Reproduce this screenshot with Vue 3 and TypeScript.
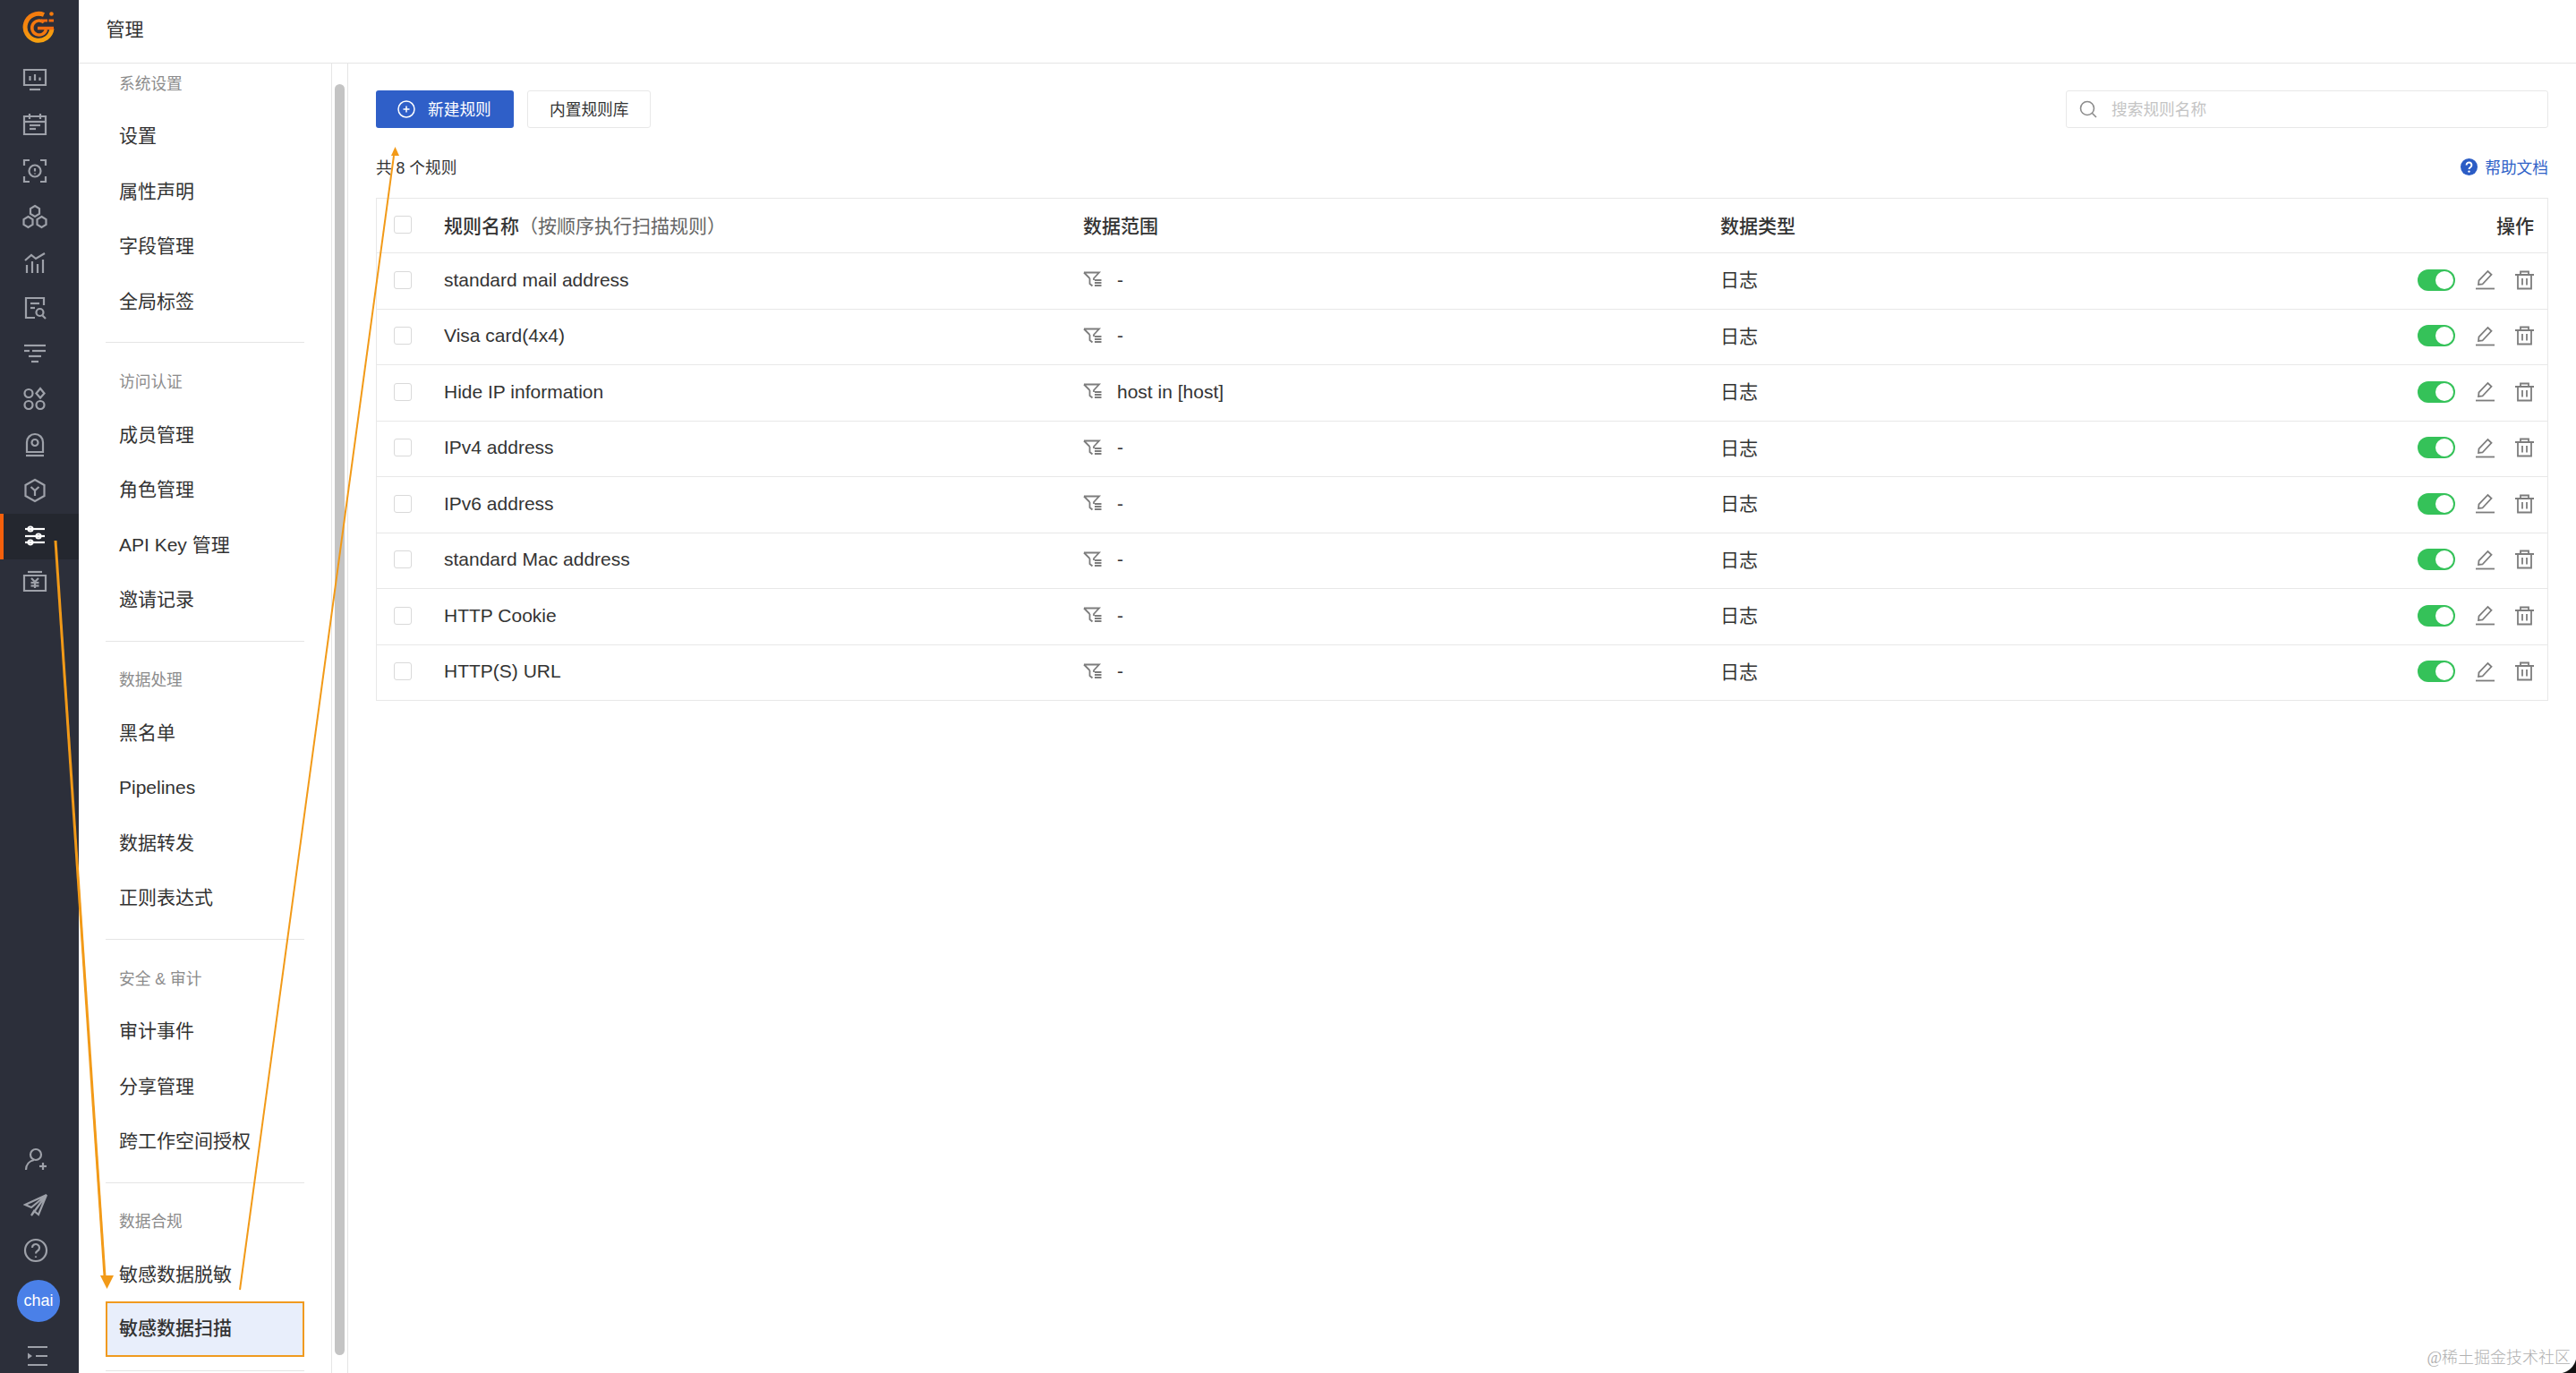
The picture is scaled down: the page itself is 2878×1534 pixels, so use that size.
<template>
  <div class="app">
    <aside class="nav">
      <div class="logo">
        <svg width="38" height="38" viewBox="0 0 38 38" fill="none">
          <defs>
            <linearGradient id="logoFill" x1="0.2" y1="0" x2="0.5" y2="1">
              <stop offset="0" stop-color="#f47a0e" />
              <stop offset="1" stop-color="#f6a00f" />
            </linearGradient>
          </defs>
          <path d="M25 4.500A15 15 0 1 0 34 20" stroke="url(#logoFill)" stroke-width="5" />
          <path d="M25 13A8 8 0 1 0 27.500 21" stroke="#f4780e" stroke-width="3.500" />
          <path d="M18 19.500h18" stroke="#f26b10" stroke-width="3.500" />
          <path d="M22 11h14" stroke="#f26b10" stroke-width="3" stroke-dasharray="7 1.500" />
          <circle cx="33.500" cy="3.500" r="2.300" fill="#f47b0e" />
        </svg>
      </div>
      <div
        v-for="(icon, i) in topIcons"
        :key="i"
        class="nav-item"
        :class="{ active: i === 10 }"
      >
        <svg width="28" height="28" viewBox="0 0 28 28" fill="none">
          <path v-for="d in icon" :key="d" :d="d" />
        </svg>
      </div>
      <div class="nav-bottom">
        <div v-for="(icon, i) in bottomIcons" :key="i" class="nav-item small">
          <svg width="28" height="28" viewBox="0 0 28 28" fill="none">
            <path v-for="d in icon" :key="d" :d="d" />
          </svg>
        </div>
        <div class="avatar">chai</div>
        <div class="nav-item collapse">
          <svg width="24" height="24" viewBox="0 0 24 24" fill="none">
            <path d="M1 2h22M10 12h13M1 22h22" />
            <path d="M1 8.500l5 3.500-5 3.500z" class="solid" />
          </svg>
        </div>
      </div>
    </aside>

    <div class="page">
      <header class="topbar">管理</header>
      <div class="body">
        <div class="menu">
          <div class="menu-list">
            <section v-for="group in menuGroups" :key="group.title" class="menu-group">
              <div class="menu-title">{{ group.title }}</div>
              <div
                v-for="item in group.items"
                :key="item"
                class="menu-item"
                :class="{ selected: item === '敏感数据扫描' }"
              >
                {{ item }}
              </div>
            </section>
          </div>
        </div>
        <div class="scroll-track"><div class="scroll-thumb"></div></div>

        <main class="main">
          <div class="toolbar">
            <button class="btn primary">
              <svg width="20" height="20" viewBox="0 0 20 20" fill="none">
                <circle cx="10" cy="10" r="9" />
                <path d="M10 6.500v7M6.500 10h7" />
              </svg>
              <span>新建规则</span>
            </button>
            <button class="btn">内置规则库</button>
            <div class="search">
              <svg width="22" height="22" viewBox="0 0 22 22" fill="none">
                <circle cx="10" cy="10" r="7.500" />
                <path d="M15.500 15.500l4.500 4.500" />
              </svg>
              <span>搜索规则名称</span>
            </div>
          </div>

          <div class="summary">
            <span>共 8 个规则</span>
            <a class="help">
              <svg width="19" height="19" viewBox="0 0 19 19">
                <circle cx="9.500" cy="9.500" r="9.500" fill="#2b5cc5" />
                <path d="M6.600 7.400a2.900 2.900 0 1 1 4.600 2.300c-1 .7-1.700 1.200-1.700 2.300" fill="none" stroke="#fff" stroke-width="2" />
                <circle cx="9.500" cy="14.600" r="1.200" fill="#fff" />
              </svg>
              <span>帮助文档</span>
            </a>
          </div>

          <div class="table">
            <div class="row head">
              <div class="cell-check"><i class="checkbox"></i></div>
              <div>规则名称<span class="hint">（按顺序执行扫描规则）</span></div>
              <div>数据范围</div>
              <div>数据类型</div>
              <div>操作</div>
            </div>
            <div v-for="rule in rules" :key="rule.name" class="row">
              <div class="cell-check"><i class="checkbox"></i></div>
              <div>{{ rule.name }}</div>
              <div class="scope">
                <svg width="21" height="19" viewBox="0 0 21 19" fill="none">
                  <path d="M1 1.500h17l-6 6.500v2M7.500 8v6l3 2.500M1 1.500L7.500 8" class="line" />
                  <path d="M13 10h7.500M13 13h7.500M13 16h7.500" class="line thick" />
                </svg>
                <span>{{ rule.scope }}</span>
              </div>
              <div class="type">日志</div>
              <div class="actions">
                <span class="switch"><i></i></span>
                <svg width="21" height="23" viewBox="0 0 21 23" fill="none">
                  <path d="M3 17l.5-4.500L13.500 2l4 3.800L7.500 16.500z" class="line" />
                  <path d="M0 21.500h21" class="line" />
                </svg>
                <svg width="21" height="22" viewBox="0 0 21 22" fill="none">
                  <path d="M0 5h21M6 5V1.500h9V5M3 5v15.500h15V5M8 9v7.500M13 9v7.500" class="line" />
                </svg>
              </div>
            </div>
          </div>
        </main>
      </div>
    </div>

    <svg class="annotations" width="2878" height="1534" viewBox="0 0 2878 1534" fill="none">
      <path d="M62 604L117 1426" stroke="#f29a18" stroke-width="3" />
      <path d="M112 1425h15l-7.500 15z" fill="#f29a18" />
      <path d="M268 1441L440 174" stroke="#f29a18" stroke-width="2" />
      <path d="M437 174h9l-4.500-10z" fill="#f29a18" />
    </svg>
    <div class="watermark">@稀土掘金技术社区</div>
    <div class="corner"></div>
  </div>
</template>

<script setup lang="ts">
interface Rule {
  name: string
  scope: string
}

const hex = (x: number, y: number) => `M${x} ${y - 6}l5 3v6l-5 3-5-3v-6z`

const topIcons: string[][] = [
  ['M2 3h24v17H2z', 'M8 25h12', 'M8.500 10v5', 'M14 8v7', 'M19.500 11.500v3.500'],
  ['M2 4h24v20H2z', 'M2 10h24', 'M8 1v6', 'M20 1v6', 'M8 14h12', 'M8 18h7'],
  ['M2 8V2h6', 'M20 2h6v6', 'M2 20v6h6', 'M20 26h6v-6', 'M14 7.500a6.500 6.500 0 1 1 0 13 6.500 6.500 0 0 1 0-13z', 'M14 11v3.500', 'M14 16.500v1'],
  [hex(14, 8), hex(6.500, 20), hex(21.500, 20)],
  ['M3 12l7-6 5 4 10-6', 'M5 17v9', 'M11 13v13', 'M17 16v10', 'M23 11v15'],
  ['M24 11V3H4v22h10', 'M9 9h10', 'M9 14h5', 'M19.500 15a4 4 0 1 1 0 8 4 4 0 0 1 0-8z', 'M22.500 22.500l3.500 3.500'],
  ['M2 5h24', 'M2 11h6', 'M11 11h15', 'M7 17h14', 'M10 23h8'],
  [
    'M7 3a4.500 4.500 0 1 1 0 9 4.500 4.500 0 0 1 0-9z',
    'M20 2l4.500 5.500-4.500 5-4.500-5z',
    'M7 16a4.500 4.500 0 1 1 0 9 4.500 4.500 0 0 1 0-9z',
    'M20 16a4.500 4.500 0 1 1 0 9 4.500 4.500 0 0 1 0-9z',
  ],
  ['M5 22V11a9 9 0 0 1 18 0v11z', 'M14 8a3.500 3.500 0 1 1 0 7 3.500 3.500 0 0 1 0-7z', 'M4 26h20'],
  ['M14 2l10.500 6v12L14 26 3.500 20V8z', 'M9.500 10l4.500 4 4.500-4', 'M14 14v6'],
  ['M3 6h22', 'M3 14h22', 'M3 21h22', 'M9 3.500a2.500 2.500 0 1 1 0 5 2.500 2.500 0 0 1 0-5z', 'M18 11.500a2.500 2.500 0 1 1 0 5 2.500 2.500 0 0 1 0-5z', 'M9 18.500a2.500 2.500 0 1 1 0 5 2.500 2.500 0 0 1 0-5z'],
  ['M6 3h16', 'M2 7h24v17H2z', 'M10 10l4 4 4-4', 'M9.500 15h9', 'M9.500 18.500h9', 'M14 14v7'],
]

const bottomIcons: string[][] = [
  ['M14 3a6 6 0 1 1 0 12 6 6 0 0 1 0-12z', 'M3 26c0-6 4-10 9-11', 'M18 22h8', 'M22 18v8'],
  ['M26 3L2 14l7 3 17-14-9 22-5-4-3 5z'],
  ['M14 2a12 12 0 1 1 0 24 12 12 0 0 1 0-24z', 'M10 11a4 4 0 1 1 6 3.500c-1.500.8-2 1.500-2 3', 'M14 20.500v1.500'],
]

const menuGroups = [
  { title: '系统设置', items: ['设置', '属性声明', '字段管理', '全局标签'] },
  { title: '访问认证', items: ['成员管理', '角色管理', 'API Key 管理', '邀请记录'] },
  { title: '数据处理', items: ['黑名单', 'Pipelines', '数据转发', '正则表达式'] },
  { title: '安全 & 审计', items: ['审计事件', '分享管理', '跨工作空间授权'] },
  { title: '数据合规', items: ['敏感数据脱敏', '敏感数据扫描'] },
]

const rules: Rule[] = [
  { name: 'standard mail address', scope: '-' },
  { name: 'Visa card(4x4)', scope: '-' },
  { name: 'Hide IP information', scope: 'host in [host]' },
  { name: 'IPv4 address', scope: '-' },
  { name: 'IPv6 address', scope: '-' },
  { name: 'standard Mac address', scope: '-' },
  { name: 'HTTP Cookie', scope: '-' },
  { name: 'HTTP(S) URL', scope: '-' },
]
</script>

<style>
html,
body {
  margin: 0;
  background: #fff;
}
</style>

<style scoped>
.app {
  position: relative;
  display: flex;
  width: 100vw;
  height: 100vh;
  overflow: hidden;
  font-family: "Liberation Sans", "Noto Sans CJK SC", sans-serif;
  font-size: 21px;
  color: #333;
  background: #fff;
}

.nav {
  flex: 0 0 88px;
  display: flex;
  flex-direction: column;
  background: #2c2f3a;
}

.logo {
  height: 63.500px;
  padding: 12px 0 0 24px;
  box-sizing: border-box;
}

.nav-item {
  flex: 0 0 51px;
  display: flex;
  align-items: center;
  padding-left: 24.500px;
  box-sizing: border-box;
}

.nav-item svg path {
  stroke: #9ea1a9;
  stroke-width: 2.200;
}

.nav-item.active {
  background: #24272f;
  border-left: 4px solid #f5600c;
  padding-left: 20.500px;
}

.nav-item.active svg path {
  stroke: #fff;
}

.nav-bottom {
  margin-top: auto;
  display: flex;
  flex-direction: column;
  padding-bottom: 7px;
}

.nav-item.small {
  padding-left: 26px;
}

.avatar {
  width: 48px;
  height: 47px;
  margin: 8px 0 0 19px;
  border-radius: 50%;
  background: #4a80e8;
  color: #fff;
  font-size: 18px;
  line-height: 47px;
  text-align: center;
}

.nav-item.collapse {
  flex: 0 0 auto;
  padding: 26px 0 0 30px;
}

.nav-item.collapse .solid {
  fill: #9ea1a9;
  stroke: none;
}

.page {
  flex: 1;
  min-width: 0;
  display: flex;
  flex-direction: column;
}

.topbar {
  flex: 0 0 71px;
  box-sizing: border-box;
  padding-left: 30.500px;
  line-height: 65px;
  color: #333;
  border-bottom: 1px solid #e5e5e5;
}

.body {
  flex: 1;
  min-height: 0;
  display: flex;
}

.menu {
  flex: 0 0 283px;
  box-sizing: border-box;
  border-right: 1px solid #e5e5e5;
  overflow: hidden;
  padding-left: 30px;
}

.menu-list {
  width: 222px;
  margin-top: -21px;
}

.menu-group {
  padding: 14.750px 0 15px;
  border-bottom: 1px solid #e5e5e5;
}

.menu-title {
  height: 56.500px;
  line-height: 58px;
  padding-left: 15px;
  font-size: 17.700px;
  color: #8c8c8c;
}

.menu-item {
  height: 61.500px;
  line-height: 62px;
  padding-left: 15px;
  box-sizing: border-box;
  color: #333;
}

.menu-item.selected {
  background: #e8eefb;
  border: 2.500px solid #f09a1f;
  padding-left: 13px;
  line-height: 56px;
  font-weight: 500;
}

.scroll-track {
  flex: 0 0 18px;
  box-sizing: border-box;
  padding: 23px 3px 0 3px;
  border-right: 1px solid #e5e5e5;
}

.scroll-thumb {
  width: 11px;
  height: 1420px;
  border-radius: 6px;
  background: #c4c4c4;
}

.main {
  flex: 1;
  min-width: 0;
  padding: 30px 31px 0 31px;
}

.toolbar {
  display: flex;
  align-items: center;
  gap: 15px;
  height: 42px;
}

.btn {
  height: 42px;
  box-sizing: border-box;
  padding: 0 24px 2px;
  border: 1px solid #e8e8e8;
  border-radius: 3px;
  background: #fff;
  color: #333;
  font: inherit;
  font-size: 17.700px;
}

.btn.primary {
  display: flex;
  align-items: center;
  gap: 14px;
  padding: 0 24px;
  width: 154px;
  border: 0;
  background: #2f5fc8;
  color: #fff;
}

.btn.primary span {
  margin-top: -2px;
}

.btn.primary svg * {
  stroke: #fff;
  stroke-width: 1.500;
}

.search {
  margin-left: auto;
  width: 539px;
  height: 42px;
  box-sizing: border-box;
  display: flex;
  align-items: center;
  gap: 15px;
  padding-left: 13px;
  border: 1px solid #e8e8e8;
  border-radius: 3px;
  font-size: 17.700px;
  color: #c4c4c4;
}

.search span {
  margin-top: -2px;
}

.search svg * {
  stroke: #8c8c8c;
  stroke-width: 1.600;
}

.summary {
  display: flex;
  justify-content: space-between;
  align-items: center;
  height: 30px;
  margin: 28px 0 20px;
  font-size: 17.700px;
}

.help {
  display: flex;
  align-items: center;
  gap: 8px;
  color: #2f62c8;
}

.table {
  border: 1px solid #e8e8e8;
}

.row {
  display: grid;
  grid-template-columns: 75px 714px 712px 1fr auto;
  align-items: center;
  height: 62.500px;
  box-sizing: border-box;
  padding: 0 15px 2px 0;
  border-top: 1px solid #e8e8e8;
}

.row.head {
  height: 60px;
  border-top: 0;
  font-weight: 500;
}

.type {
  margin-top: -3px;
}

.hint {
  font-weight: 400;
  color: #666;
}

.cell-check {
  padding-left: 19px;
  display: flex;
}

.checkbox {
  width: 20px;
  height: 20px;
  box-sizing: border-box;
  border: 1px solid #d9d9d9;
  border-radius: 3px;
}

.scope {
  display: flex;
  align-items: center;
  gap: 17px;
}

.line {
  stroke: #7d7d7d;
  stroke-width: 1.800;
}

.line.thick {
  stroke-width: 2.200;
}

.actions {
  display: flex;
  align-items: center;
  gap: 23px;
}

.switch {
  display: flex;
  justify-content: flex-end;
  align-items: center;
  width: 42px;
  height: 24px;
  box-sizing: border-box;
  padding-right: 2px;
  border-radius: 12px;
  background: #35c259;
}

.switch i {
  width: 20px;
  height: 20px;
  border-radius: 50%;
  background: #fff;
}

.annotations {
  position: absolute;
  left: 0;
  top: 0;
  pointer-events: none;
}

.watermark {
  position: absolute;
  right: 6px;
  bottom: 6px;
  font-family: "Liberation Serif", "Noto Sans CJK SC", serif;
  font-size: 18px;
  font-weight: 300;
  color: #b0b0b0;
}

.corner {
  position: absolute;
  right: 0;
  bottom: 0;
  width: 20px;
  height: 20px;
  background: radial-gradient(circle at 0 0, transparent 20px, #111 21px);
}
</style>
